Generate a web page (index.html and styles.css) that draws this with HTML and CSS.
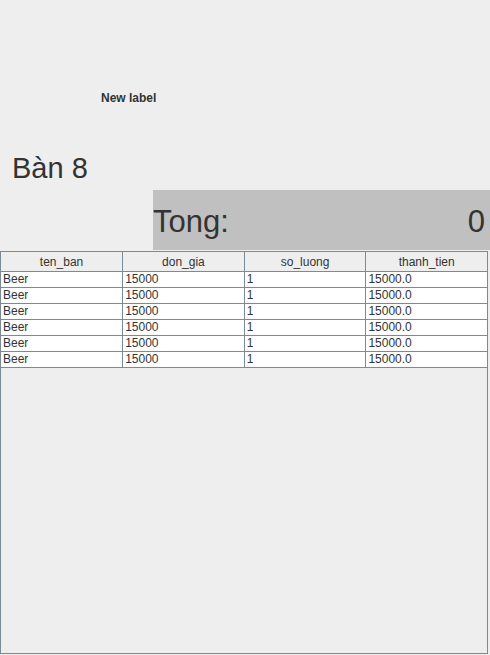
FILE: index.html
```html
<!DOCTYPE html>
<html>
<head>
<meta charset="utf-8">
<link rel="stylesheet" href="styles.css">
</head>
<body>
<div class="top">
  <div class="new-label">New label</div>
  <div class="ban">Bàn 8</div>
</div>
<div class="total">
  <span>Tong:</span>
  <span>0</span>
</div>
<div class="scroll">
  <table class="grid">
    <thead>
      <tr><th>ten_ban</th><th>don_gia</th><th>so_luong</th><th>thanh_tien</th></tr>
    </thead>
    <tbody>
      <tr><td>Beer</td><td>15000</td><td>1</td><td>15000.0</td></tr>
      <tr><td>Beer</td><td>15000</td><td>1</td><td>15000.0</td></tr>
      <tr><td>Beer</td><td>15000</td><td>1</td><td>15000.0</td></tr>
      <tr><td>Beer</td><td>15000</td><td>1</td><td>15000.0</td></tr>
      <tr><td>Beer</td><td>15000</td><td>1</td><td>15000.0</td></tr>
      <tr><td>Beer</td><td>15000</td><td>1</td><td>15000.0</td></tr>
    </tbody>
  </table>
</div>
</body>
</html>
```
FILE: styles.css
```css
html, body {
  margin: 0;
  padding: 0;
  background: #eeeeee;
  font-family: "Liberation Sans", Arial, sans-serif;
  color: #333333;
}
.top {
  height: 190px;
  display: flex;
  flex-direction: column;
}
.new-label {
  margin-top: 91px;
  padding-left: 101px;
  font-size: 12px;
  font-weight: bold;
  line-height: 15px;
}
.ban {
  margin-top: 45px;
  padding-left: 12px;
  font-size: 29px;
  line-height: 34px;
}
.total {
  box-sizing: border-box;
  margin-left: 153px;
  width: 337px;
  height: 60px;
  padding: 3px 5px 0 0;
  background: #c0c0c0;
  display: flex;
  justify-content: space-between;
  align-items: center;
  font-size: 31px;
}
.scroll {
  margin-top: 1px;
  width: 486px;
  height: 401px;
  border: 1px solid #7a8a99;
  background: #eeeeee;
  overflow: hidden;
}
.grid {
  border-collapse: collapse;
  table-layout: fixed;
  width: 487px;
  font-size: 12px;
}
.grid th, .grid td {
  border-right: 1px solid #7a8a99;
  border-bottom: 1px solid #7a8a99;
  padding: 0 2px;
  white-space: nowrap;
  overflow: hidden;
}
.grid th {
  height: 19px;
  background: #eeeeee;
  font-weight: normal;
  color: #333333;
  text-align: center;
  padding: 0;
}
.grid td {
  height: 15px;
  line-height: 15px;
  background: #ffffff;
  color: #333333;
}
```
